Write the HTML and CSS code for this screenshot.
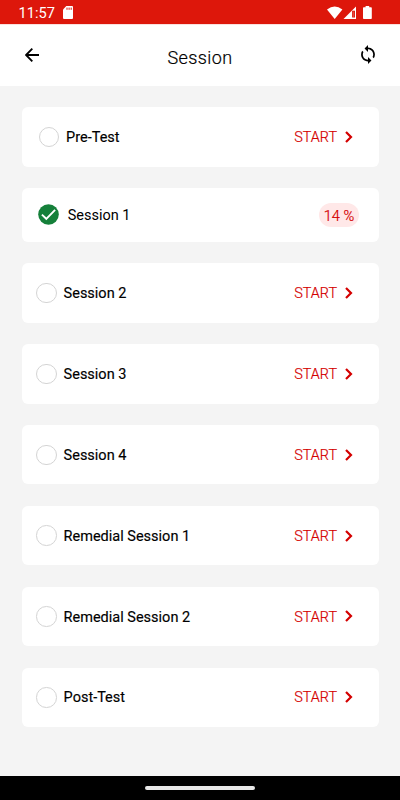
FILE: index.html
```html
<!DOCTYPE html>
<html lang="en">
<head>
<meta charset="utf-8">
<title>Session</title>
<link rel="stylesheet" href="styles.css">
</head>
<body>
<svg class="defs" aria-hidden="true">
  <symbol id="chevron" viewBox="0 0 8 12"><path d="M1 1l5 5-5 5" fill="none" stroke="currentColor" stroke-width="2.2"/></symbol>
</svg>
<div class="screen">
  <div class="status">
    <span class="time">11:57</span>
    <svg class="sd" viewBox="0 0 10 13"><path d="M3.3 0H9a1 1 0 0 1 1 1v11a1 1 0 0 1-1 1H1a1 1 0 0 1-1-1V3.4z" fill="#fff"/><path d="M4 1.6v2.2M6.1 1.6v2.2M8.2 1.6v2.2" stroke="#dd170b" stroke-width="1"/></svg>
    <svg class="signals" viewBox="0 0 46 14"><path d="M0 3.4Q7.7-2.4 15.4 3.4L7.7 13z" fill="#fff"/><path d="M29 0.5V13H16.5z" fill="#fff"/><path d="M25.1 4.7H28V11.500H25.1z" fill="#dd170b"/><path d="M26.1 5.5H27.2V11H26.1z" fill="#fff" opacity=".25"/><path d="M38.6 0h3.6v1.3H44a.8.8 0 0 1 .8.8v10.1a.8.8 0 0 1-.8.8h-7.200a.8.8 0 0 1-.8-.8V2.100a.8.8 0 0 1 .8-.8h1.800z" fill="#fff"/></svg>
  </div>
  <header class="bar">
    <svg class="back" viewBox="0 0 14 14"><path d="M14 7H1.500M7.300 .7L1 7l6.300 6.300" fill="none" stroke="#000" stroke-width="1.900"/></svg>
    <h1>Session</h1>
    <svg class="sync" viewBox="4 1 16 22"><path d="M12 4V1L8 5l4 4V6c3.310 0 6 2.690 6 6 0 1.010-.25 1.970-.7 2.800l1.460 1.460A7.930 7.930 0 0 0 20 12c0-4.420-3.580-8-8-8zm0 14c-3.310 0-6-2.690-6-6 0-1.010.25-1.970.7-2.800L5.240 7.740A7.930 7.930 0 0 0 4 12c0 4.420 3.580 8 8 8v3l4-4-4-4z" fill="#000"/></svg>
  </header>
  <main class="list">
    <div class="card first"><i class="ring"></i><span class="name">Pre-Test</span><span class="start">START</span><svg class="chev"><use href="#chevron"/></svg></div>
    <div class="card done"><svg class="check" viewBox="0 0 21 21"><circle cx="10.500" cy="10.500" r="10.300" fill="#15803a"/><path d="M3.900 10.600l4.400 4.200 8.800-9" fill="none" stroke="#fff" stroke-width="1.900"/></svg><span class="name">Session 1</span><span class="score">14 %</span></div>
    <div class="card"><i class="ring"></i><span class="name">Session 2</span><span class="start">START</span><svg class="chev"><use href="#chevron"/></svg></div>
    <div class="card"><i class="ring"></i><span class="name">Session 3</span><span class="start">START</span><svg class="chev"><use href="#chevron"/></svg></div>
    <div class="card"><i class="ring"></i><span class="name">Session 4</span><span class="start">START</span><svg class="chev"><use href="#chevron"/></svg></div>
    <div class="card"><i class="ring"></i><span class="name">Remedial Session 1</span><span class="start">START</span><svg class="chev"><use href="#chevron"/></svg></div>
    <div class="card"><i class="ring"></i><span class="name">Remedial Session 2</span><span class="start">START</span><svg class="chev"><use href="#chevron"/></svg></div>
    <div class="card"><i class="ring"></i><span class="name">Post-Test</span><span class="start">START</span><svg class="chev"><use href="#chevron"/></svg></div>
  </main>
  <footer class="nav"><i class="handle"></i></footer>
</div>
</body>
</html>
```
FILE: styles.css
```css
* { box-sizing: border-box; }
body { margin: 0; font-family: Roboto, "Liberation Sans", sans-serif; color: #000; }
.defs { display: none; }
.screen { width: 400px; height: 800px; display: flex; flex-direction: column; background: #f4f4f4; overflow: hidden; }
.status { height: 24px; flex: none; background: #dd170b; display: flex; align-items: center; padding: 0 27px 0 18.500px; color: #fff; }
.time { font-size: 14.600px; line-height: 24px; width: 44.500px; margin-top: 2px; }
.sd { width: 10px; height: 13px; margin-top: 1px; }
.signals { width: 46px; height: 14px; margin-left: auto; margin-top: 1px; }
.bar { height: 62px; flex: none; background: #fff; border-top: 1px solid #fbe0de; display: grid; grid-template-columns: 60px 1fr 60px; align-items: center; }
.back { width: 14px; height: 14px; margin-left: 25.200px; margin-bottom: 1px; }
.bar h1 { margin: 5px 0 0; font-size: 18px; font-weight: 300; letter-spacing: .4px; text-align: center; line-height: 24px; color: #000; -webkit-text-stroke: .2px #000; }
.sync { width: 14px; height: 19px; justify-self: end; margin-right: 25px; margin-bottom: 1.500px; }
.list { flex: 1; display: flex; flex-direction: column; gap: 21.500px; padding: 21.200px 21.500px 0; }
.card { height: 59.350px; flex: none; background: #fff; border-radius: 6px; display: flex; align-items: center; padding: 0 25.500px 0 14.700px; font-size: 15px; line-height: 20px; }
.first { padding-left: 17.200px; }
.done { height: 53.900px; padding-left: 16.500px; padding-right: 19.500px; }
.ring { width: 20.500px; height: 20.500px; flex: none; border: 1px solid #d4d4d4; border-radius: 50%; margin-right: 6.900px; }
.check { width: 21px; height: 21px; flex: none; margin-right: 8.700px; }
.name { flex: 1; font-size: 14.500px; padding-top: 2.200px; -webkit-text-stroke: .15px #000; }
.done .name { -webkit-text-stroke: 0; }
.start { color: #d40000; font-weight: 300; font-size: 14.400px; padding-top: 2.200px; margin-right: 8px; -webkit-text-stroke: .22px #d40000; }
.chev { width: 8px; height: 12px; color: #d40000; }
.score { width: 40px; height: 24px; border-radius: 12px; background: #ffe8e8; color: #d40000; font-size: 14.600px; font-weight: 300; line-height: 26px; text-align: center; -webkit-text-stroke: .22px #d40000; }
.nav { height: 24.500px; flex: none; background: #000; display: flex; align-items: center; justify-content: center; }
.handle { width: 110px; height: 4px; border-radius: 2px; background: #e8e8e8; }
```
